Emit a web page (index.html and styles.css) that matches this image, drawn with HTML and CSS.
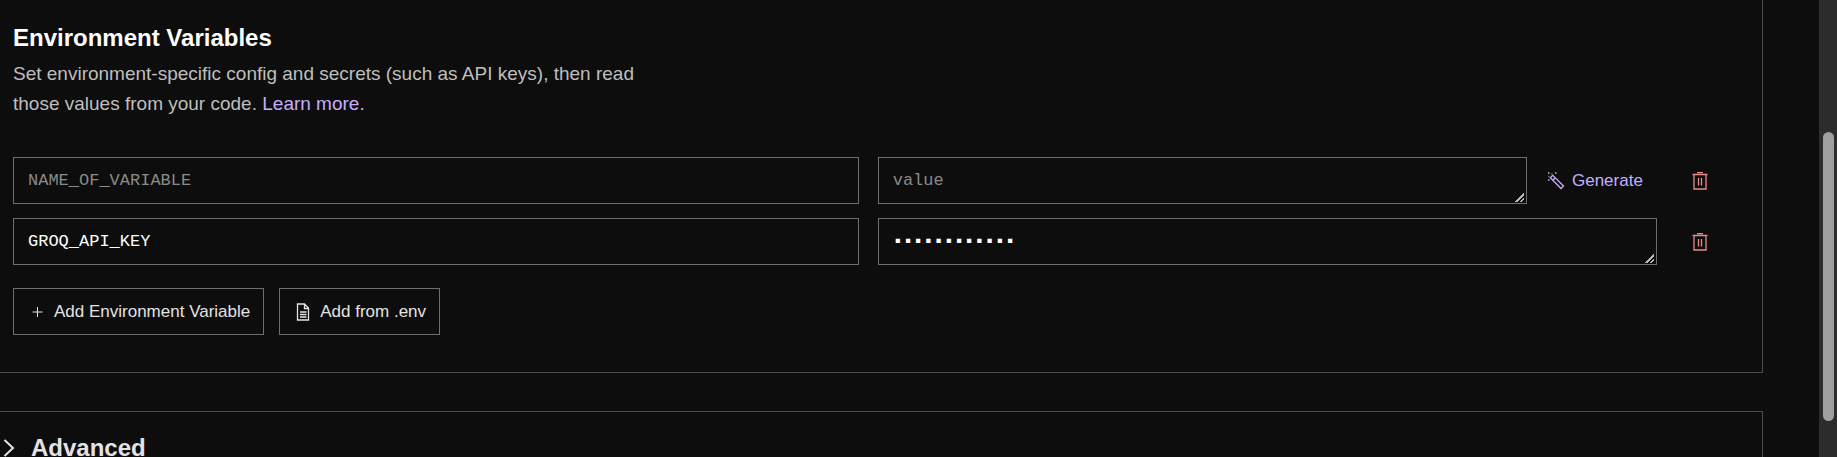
FILE: index.html
```html
<!DOCTYPE html>
<html lang="en">
<head>
<meta charset="utf-8">
<title>Environment Variables</title>
<link rel="stylesheet" href="styles.css">
</head>
<body>
<svg class="sprite" aria-hidden="true">
  <symbol id="trash" viewBox="0 0 16 18">
    <path d="M.5 2.500h15M5 .7h6M2 2.500v14.500h12V2.500M6.500 6v7.500M9.500 6v7.500"/>
  </symbol>
</svg>
<div class="page">
  <main class="content">
    <section class="card env">
      <h2 class="title">Environment Variables</h2>
      <p class="description">Set environment-specific config and secrets (such as API keys), then read those values from your code. <a class="link" href="#learn">Learn more.</a></p>
      <div class="rows">
        <div class="row">
          <input class="field" type="text" placeholder="NAME_OF_VARIABLE" aria-label="Variable name">
          <div class="value">
            <textarea class="field" rows="1" placeholder="value" aria-label="Variable value"></textarea>
            <button class="generate" type="button">
              <svg class="icon-wand" viewBox="0 0 18 18" aria-hidden="true"><path d="M3.300 5.800l2.500-2.500L16.500 14l-2.500 2.500zM5.800 8.300l2.500-2.500"/><path d="M1 1h1.500M8 1h1.500M1 8h1.500M4.500 2h.8M1.500 4.500h.8"/></svg>
              Generate
            </button>
          </div>
          <button class="delete" type="button" aria-label="Delete variable"><svg class="icon-trash"><use href="#trash"/></svg></button>
        </div>
        <div class="row">
          <input class="field" type="text" value="GROQ_API_KEY" aria-label="Variable name">
          <div class="value">
            <textarea class="field" rows="1" aria-label="Variable value">▪▪▪▪▪▪▪▪▪▪▪▪</textarea>
          </div>
          <button class="delete" type="button" aria-label="Delete variable"><svg class="icon-trash"><use href="#trash"/></svg></button>
        </div>
      </div>
      <div class="actions">
        <button class="button" type="button">
          <svg class="icon" viewBox="0 0 20 20" aria-hidden="true"><path d="M10.500 5v10M5.500 10h10"/></svg>
          Add Environment Variable
        </button>
        <button class="button" type="button">
          <svg class="icon icon-file" viewBox="0 0 20 20" aria-hidden="true"><path d="M4.500 2h7l4 4v12h-11zM11.500 2v4.500h4M7 10h6.500M7 12.500h6.500M7 15h6.500"/></svg>
          Add from .env
        </button>
      </div>
    </section>
    <section class="card advanced">
      <button class="toggle" type="button">
        <svg class="icon-chevron" viewBox="0 0 12 18" aria-hidden="true"><path d="M1.500 1L10 9l-8.500 8"/></svg>
        Advanced
      </button>
    </section>
  </main>
  <div class="scrollbar" aria-hidden="true"><div class="thumb"></div></div>
</div>
</body>
</html>
```
FILE: styles.css
```css
* {
  box-sizing: border-box;
}

html {
  color-scheme: dark;
}

body {
  margin: 0;
  height: 100vh;
  overflow: hidden;
  background: #0d0d0d;
  color: #fff;
  font-family: "Liberation Sans", Arial, sans-serif;
}

svg {
  flex: none;
  fill: none;
  stroke: currentColor;
}

.sprite {
  display: none;
}

.page {
  display: flex;
  height: 100%;
}

.content {
  flex: 1;
  display: flex;
  flex-direction: column;
  gap: 38px;
  padding-right: 56px;
  overflow: hidden;
}

.card {
  flex: none;
  border: 1px solid #4d4d4d;
  border-left: 0;
}

.env {
  border-top: 0;
  padding: 22px 32px 37px 13px;
}

.title {
  margin: 0;
  font-size: 24px;
  line-height: 32px;
}

.description {
  margin: 5px 0 38px;
  max-width: 660px;
  color: #bfbfbf;
  font-size: 19px;
  line-height: 30px;
}

.link {
  color: #c7adff;
  text-decoration: none;
}

.rows {
  display: grid;
  gap: 14px;
}

.row {
  display: grid;
  grid-template-columns: 14fr 13fr 60px;
  column-gap: 13px;
}

.value {
  display: flex;
  gap: 20px;
  margin-left: 6px;
}

.field {
  display: block;
  flex: 1;
  min-width: 0;
  height: 47px;
  margin: 0;
  padding: 10px 14px;
  border: 1px solid #6e6e6e;
  border-radius: 0;
  background: transparent;
  color: #fff;
  font-family: "Liberation Mono", "DejaVu Sans Mono", monospace;
  font-size: 17px;
  line-height: 24px;
  overflow: hidden;
}

textarea.field {
  padding-top: 11px;
}

.field::-webkit-resizer {
  background: linear-gradient(135deg, transparent 49%, #b5b5b5 49%, #b5b5b5 62%, transparent 62%, transparent 76%, #b5b5b5 76%, #b5b5b5 86%, transparent 86%) right 2px bottom 1px / 9px 9px no-repeat;
}

.field::placeholder {
  color: #8a8a8a;
}

button {
  padding: 0;
  border: 0;
  background: none;
  color: inherit;
  font-family: inherit;
  font-size: 17px;
}

.generate {
  display: flex;
  align-items: center;
  gap: 7px;
  width: 110px;
  color: #c7adff;
}

.delete {
  display: grid;
  place-items: center;
  color: #e88b8b;
}

.icon-wand {
  width: 18px;
  height: 18px;
  stroke-width: 1.3;
}

.icon-trash {
  width: 16px;
  height: 18px;
  stroke-width: 1.3;
}

.actions {
  display: flex;
  gap: 15px;
  margin-top: 23px;
}

.button {
  display: flex;
  align-items: center;
  gap: 7px;
  height: 47px;
  padding: 0 13px;
  border: 1px solid #6e6e6e;
  color: #e3e3e3;
}

.icon {
  width: 20px;
  height: 20px;
}

.icon-file {
  stroke-width: 1.3;
}

.advanced {
  padding: 20px 3px;
}

.toggle {
  display: flex;
  align-items: center;
  gap: 16px;
  color: #e3e3e3;
  font-size: 24px;
  font-weight: 700;
  line-height: 32px;
}

.icon-chevron {
  width: 12px;
  height: 18px;
  stroke-width: 2;
}

.scrollbar {
  width: 18px;
  padding: 132px 3px 36px 4px;
  background: #2c2c2c;
}

.thumb {
  height: 100%;
  border-radius: 6px;
  background: #9f9f9f;
}
```
